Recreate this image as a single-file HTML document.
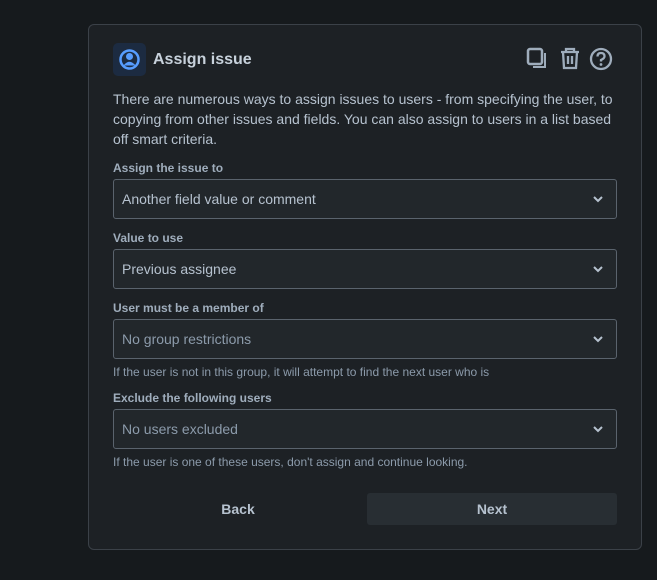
<!DOCTYPE html>
<html><head><style>
*{box-sizing:border-box;margin:0;padding:0}
body{width:657px;height:580px;background:#161a1d;font-family:"Liberation Sans",sans-serif;color:#b6c2cf;position:relative;overflow:hidden}
.panel{position:absolute;left:88px;top:24px;width:554px;height:526px;background:#1d2125;border:1px solid #3b4148;border-radius:6px}
.ic{position:absolute;left:24px;top:18px;width:33px;height:33px;background:#1c2b41;border-radius:5px}
.title{position:absolute;left:64px;top:26px;font-size:16px;font-weight:bold;color:#c7d1db}
.desc{position:absolute;left:24px;top:64px;width:510px;font-size:14px;line-height:20px;color:#b6c2cf}
.lbl{position:absolute;left:24px;font-size:12px;font-weight:bold;color:#9fadbc}
.sel{position:absolute;left:24px;width:504px;height:40px;border:1px solid #5a636d;border-radius:3px;background:#22272b;font-size:14px;line-height:38px;padding-left:8px;color:#b6c2cf}
.sel.ph{color:#8c9bab}
.sel svg{position:absolute;right:13px;top:15px}
.help{position:absolute;left:24px;font-size:12px;color:#8c9bab}
.btn{position:absolute;top:468px;height:32px;font-size:14px;font-weight:bold;color:#b6c2cf;text-align:center;line-height:32px}
</style></head><body>
<div class="panel">
<div class="ic"><svg width="33" height="33" viewBox="0 0 33 33"><circle cx="16.5" cy="16.5" r="9" fill="none" stroke="#579dff" stroke-width="2.5"/><circle cx="16.5" cy="13.5" r="3.5" fill="#579dff"/><path d="M10.5 22.5 Q16.5 15 22.5 22.5 Z" fill="#579dff"/></svg></div>
<div class="title">Assign issue</div>
<svg style="position:absolute;left:437px;top:21px" width="90" height="26" viewBox="0 0 90 26">
<rect x="2" y="3" width="14" height="15" rx="2" fill="none" stroke="#9fadbc" stroke-width="2.5"/>
<path d="M19 7 V21 H7" fill="none" stroke="#9fadbc" stroke-width="2"/>
<path d="M35 6 H53 M40 6 V3 H48 V6 M37 6 L38 22 H50 L51 6 M42 10 V18 M46 10 V18" fill="none" stroke="#9fadbc" stroke-width="2.3"/>
<circle cx="75" cy="13" r="10" fill="none" stroke="#9fadbc" stroke-width="2.3"/>
<path d="M71.5 10.5 Q71.5 7 75 7 Q78.5 7 78.5 10.3 Q78.5 12.5 75 14 V15.5" fill="none" stroke="#9fadbc" stroke-width="2.3"/>
<circle cx="75" cy="18.5" r="1.4" fill="#9fadbc"/>
</svg>
<div class="desc">There are numerous ways to assign issues to users - from specifying the user, to copying from other issues and fields. You can also assign to users in a list based off smart criteria.</div>
<div class="lbl" style="top:136px">Assign the issue to</div>
<div class="sel" style="top:154px">Another field value or comment<svg width="10" height="8"><path d="M1 2 L5 6 L9 2" fill="none" stroke="#b6c2cf" stroke-width="2"/></svg></div>
<div class="lbl" style="top:206px">Value to use</div>
<div class="sel" style="top:224px">Previous assignee<svg width="10" height="8"><path d="M1 2 L5 6 L9 2" fill="none" stroke="#b6c2cf" stroke-width="2"/></svg></div>
<div class="lbl" style="top:276px">User must be a member of</div>
<div class="sel ph" style="top:294px">No group restrictions<svg width="10" height="8"><path d="M1 2 L5 6 L9 2" fill="none" stroke="#b6c2cf" stroke-width="2"/></svg></div>
<div class="help" style="top:340px">If the user is not in this group, it will attempt to find the next user who is</div>
<div class="lbl" style="top:366px">Exclude the following users</div>
<div class="sel ph" style="top:384px">No users excluded<svg width="10" height="8"><path d="M1 2 L5 6 L9 2" fill="none" stroke="#b6c2cf" stroke-width="2"/></svg></div>
<div class="help" style="top:430px">If the user is one of these users, don't assign and continue looking.</div>
<div class="btn" style="left:24px;width:250px">Back</div>
<div class="btn" style="left:278px;width:250px;background:#282e33;border-radius:3px">Next</div>
</div>
</body></html>
